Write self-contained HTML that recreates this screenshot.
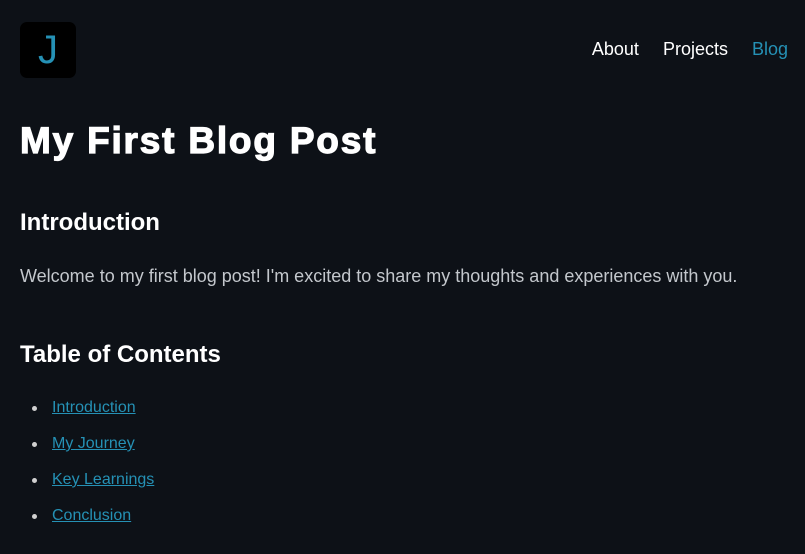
<!DOCTYPE html>
<html><head><meta charset="utf-8"><style>
html,body{margin:0;background:#0d1117;width:805px;height:554px;overflow:hidden;font-family:"Liberation Sans",Arial,sans-serif;color:#fff}
.logo{position:absolute;left:20px;top:22px;width:56px;height:56px;background:#000;border-radius:7px;color:#2591b5;font-size:40px;font-weight:normal;text-align:center;line-height:56px;font-family:"Liberation Sans",sans-serif;}
.nav{position:absolute;top:39px;right:17px;font-size:18px}
.nav span{margin-left:24px}
h1{position:absolute;left:20px;top:119px;margin:0;font-size:37px;font-weight:bold;-webkit-text-stroke:1.2px #fff;letter-spacing:1.8px;line-height:44px}
h2{position:absolute;left:20px;margin:0;font-size:24px;font-weight:bold;line-height:28px}
p{position:absolute;left:20px;top:265px;margin:0;font-size:18px;color:#c3c7cc;line-height:22px}
ul{position:absolute;left:0;top:398px;margin:0;padding:0 0 0 52px;list-style:none;color:#d0d0d0;font-size:16px}
li{height:36px;line-height:20px;position:relative}
li:before{content:"";position:absolute;left:-20px;top:8px;width:5px;height:5px;border-radius:50%;background:#d0d0d0}
a{color:#2591b5;text-decoration:underline}
</style></head><body>
<div class="logo">J</div>
<div class="nav"><span>About</span><span>Projects</span><span style="color:#2591b5">Blog</span></div>
<h1>My First Blog Post</h1>
<h2 style="top:209px">Introduction</h2>
<p>Welcome to my first blog post! I'm excited to share my thoughts and experiences with you.</p>
<h2 style="top:341px">Table of Contents</h2>
<ul><li><a>Introduction</a></li><li><a>My Journey</a></li><li><a>Key Learnings</a></li><li><a>Conclusion</a></li></ul>
</body></html>
